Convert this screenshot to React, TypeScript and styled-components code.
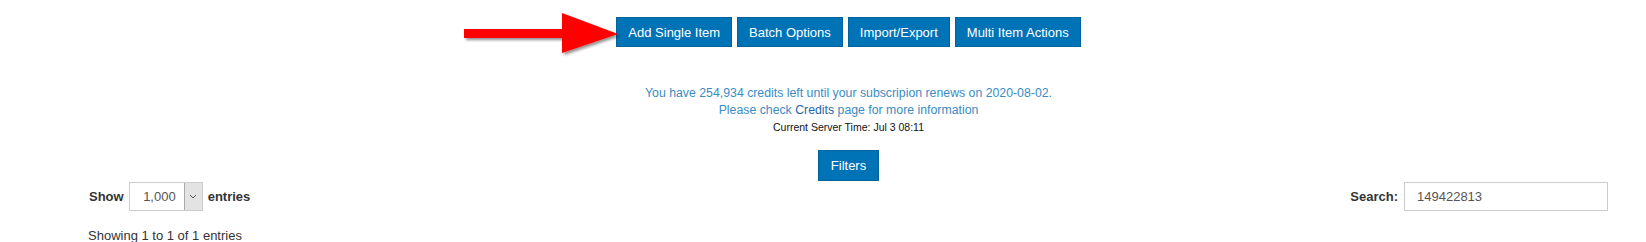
import React, { useState } from "react";
import styled, { createGlobalStyle } from "styled-components";

const GlobalStyle = createGlobalStyle`
  body {
    margin: 0;
    background: #fff;
    font-family: "Liberation Sans", Arial, sans-serif;
    color: #333;
  }
`;

const actions = ["Add Single Item", "Batch Options", "Import/Export", "Multi Item Actions"];

export default function App() {
  const [search, setSearch] = useState<string>("149422813");

  return (
    <Page>
      <GlobalStyle />
      <Center>
        <ButtonRow>
          <Arrow width="158" height="44" viewBox="0 0 158 44">
            <defs>
              <filter id="shadow" x="-10%" y="-20%" width="130%" height="160%">
                <feDropShadow dx="2" dy="2" stdDeviation="1.5" floodColor="#000" floodOpacity="0.45" />
              </filter>
            </defs>
            <polygon
              points="0,16 98,16 98,0 154,21 98,40 98,25 0,25"
              fill="#ff0000"
              filter="url(#shadow)"
            />
          </Arrow>
          {actions.map((label) => (
            <ActionButton key={label}>{label}</ActionButton>
          ))}
        </ButtonRow>

        <Notice>
          <p>You have 254,934 credits left until your subscripion renews on 2020-08-02.</p>
          <p>
            Please check <CreditLink href="#">Credits</CreditLink> page for more information
          </p>
          <ServerTime>Current Server Time: Jul 3 08:11</ServerTime>
        </Notice>

        <FilterButton>Filters</FilterButton>
      </Center>

      <TableControls>
        <Label>
          Show
          <SelectBox>
            <SelectValue>1,000</SelectValue>
            <Caret>
              <svg width="8" height="5" viewBox="0 0 8 5">
                <path d="M1 1 L4 4 L7 1" fill="none" stroke="#555" strokeWidth="1" />
              </svg>
            </Caret>
          </SelectBox>
          entries
        </Label>
        <Label>
          Search:
          <SearchInput value={search} onChange={(e) => setSearch(e.target.value)} />
        </Label>
      </TableControls>

      <Info>Showing 1 to 1 of 1 entries</Info>
    </Page>
  );
}

const Page = styled.div`
  width: 1646px;
  height: 242px;
  overflow: hidden;
`;

const Center = styled.div`
  display: flex;
  flex-direction: column;
  align-items: center;
  padding-left: 51px;
  padding-top: 17px;
`;

const ButtonRow = styled.div`
  position: relative;
  display: flex;
  gap: 5px;
`;

const Arrow = styled.svg`
  position: absolute;
  right: 100%;
  top: -4px;
  margin-right: -6px;
`;

const ActionButton = styled.button`
  height: 30px;
  padding: 0 11px;
  background: #0073b7;
  border: 1px solid #00629d;
  color: #fff;
  font-family: "Liberation Sans", Arial, sans-serif;
  font-size: 13px;
  cursor: pointer;
`;

const Notice = styled.div`
  margin-top: 38px;
  text-align: center;
  font-size: 12.3px;
  line-height: 17px;
  color: #3a8cc4;

  p {
    margin: 0;
  }
`;

const CreditLink = styled.a`
  color: #1e68ad;
  text-decoration: none;
`;

const ServerTime = styled.p`
  color: #111;
  font-size: 10.5px;
`;

const FilterButton = styled(ActionButton)`
  margin-top: 14px;
  height: 31px;
  padding: 0 12px;
`;

const TableControls = styled.div`
  display: flex;
  justify-content: space-between;
  align-items: center;
  padding: 0 38px 0 89px;
  margin-top: 1px;
`;

const Label = styled.label`
  display: flex;
  align-items: center;
  gap: 5px;
  font-size: 13px;
  font-weight: bold;
  color: #333;
`;

const SelectBox = styled.div`
  display: flex;
  width: 74px;
  height: 29px;
  box-sizing: border-box;
  border: 1px solid #ccc;
  background: #fff;
`;

const SelectValue = styled.span`
  flex: 1;
  display: flex;
  align-items: center;
  justify-content: flex-end;
  padding-right: 8px;
  font-weight: normal;
  color: #555;
  font-size: 13px;
`;

const Caret = styled.span`
  width: 17px;
  display: flex;
  align-items: center;
  justify-content: center;
  background: #e3e3e3;
  border-left: 1px solid #aaa;
`;

const SearchInput = styled.input`
  width: 204px;
  height: 29px;
  box-sizing: border-box;
  margin-left: 1px;
  border: 1px solid #ccc;
  padding: 0 12px;
  font-family: "Liberation Sans", Arial, sans-serif;
  font-size: 13px;
  color: #555;
  outline: none;
`;

const Info = styled.div`
  margin-top: 16px;
  padding-left: 88px;
  font-size: 13px;
  line-height: 17px;
  color: #333;
`;
